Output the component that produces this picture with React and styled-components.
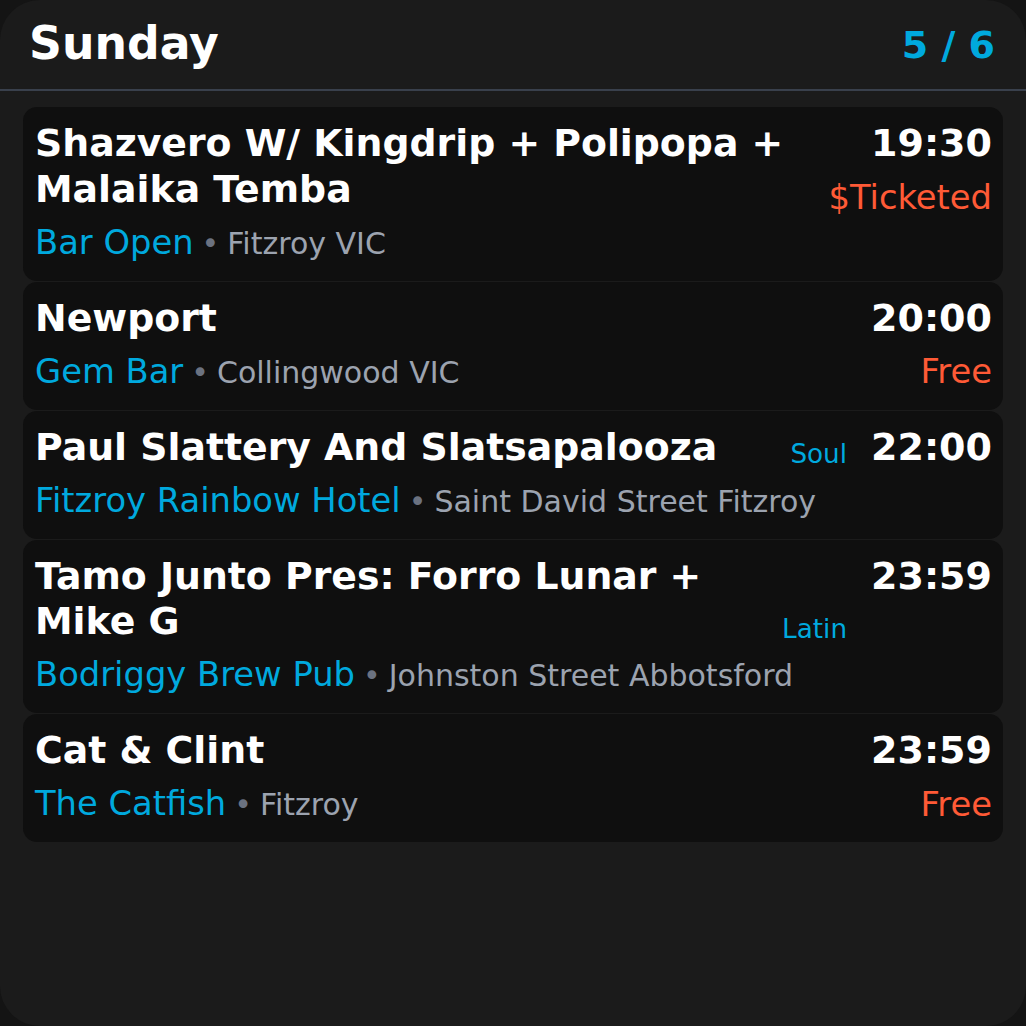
import styled, { createGlobalStyle } from 'styled-components';

const GlobalStyle = createGlobalStyle`
  html, body {
    margin: 0;
    padding: 0;
    background: #141414;
  }
  body {
    font-family: 'DejaVu Sans', 'Liberation Sans', sans-serif;
    color: #fff;
  }
`;

const Screen = styled.div`
  width: 1026px;
  height: 1026px;
  box-sizing: border-box;
  background: #1b1b1b;
  border-radius: 40px;
  overflow: hidden;
`;

const Header = styled.header`
  height: 91px;
  box-sizing: border-box;
  padding: 0 31px 0 29px;
  display: flex;
  align-items: center;
  justify-content: space-between;
  border-bottom: 2px solid #39404c;
`;

const Day = styled.h1`
  margin: 0;
  font-size: 45.7px;
  font-weight: bold;
  line-height: 1.2;
`;

const Count = styled.div`
  font-size: 38px;
  font-weight: bold;
  color: #00a9de;
`;

const List = styled.div`
  display: flex;
  flex-direction: column;
  gap: 1px;
  padding: 16px 23px;
`;

const Card = styled.div`
  display: flex;
  align-items: stretch;
  padding: 14px 11px 13px 12px;
  background: #0f0f0f;
  border-radius: 14px;
`;

const Main = styled.div`
  flex: 1;
  display: flex;
  flex-direction: column;
  min-width: 0;
`;

const Title = styled.div`
  font-size: 37.8px;
  font-weight: bold;
  line-height: 45.5px;
`;

const Place = styled.div`
  margin-top: 5.5px;
  font-size: 33.75px;
  line-height: 50px;
  white-space: nowrap;
`;

const Venue = styled.span`
  color: #00a9de;
`;

const Dot = styled.span`
  font-size: 30px;
  line-height: 1;
  color: #6b7280;
  margin: 0 8px;
`;

const Suburb = styled.span`
  font-size: 30px;
  line-height: 1;
  color: #9ca3af;
`;

const Genre = styled.div`
  align-self: flex-start;
  margin: ${p => p.$lines * 45.5 - 35}px 0 0 16px;
  font-size: 26.25px;
  line-height: 39px;
  color: #00a9de;
`;

const Side = styled.div`
  display: flex;
  flex-direction: column;
  align-items: flex-end;
  margin-left: ${p => (p.$afterGenre ? 24 : 8)}px;
`;

const Time = styled.div`
  font-size: 38px;
  font-weight: bold;
  line-height: 45.5px;
`;

const Price = styled.div`
  margin-top: 8px;
  font-size: 33.75px;
  line-height: 46px;
  color: #ff5a36;
`;

const events = [
  {
    title: 'Shazvero W/ Kingdrip + Polipopa + Malaika Temba',
    lines: 2,
    venue: 'Bar Open',
    suburb: 'Fitzroy VIC',
    time: '19:30',
    price: '$Ticketed',
  },
  {
    title: 'Newport',
    lines: 1,
    venue: 'Gem Bar',
    suburb: 'Collingwood VIC',
    time: '20:00',
    price: 'Free',
  },
  {
    title: 'Paul Slattery And Slatsapalooza',
    lines: 1,
    genre: 'Soul',
    venue: 'Fitzroy Rainbow Hotel',
    suburb: 'Saint David Street Fitzroy',
    time: '22:00',
  },
  {
    title: 'Tamo Junto Pres: Forro Lunar + Mike G',
    lines: 2,
    genre: 'Latin',
    venue: 'Bodriggy Brew Pub',
    suburb: 'Johnston Street Abbotsford',
    time: '23:59',
  },
  {
    title: 'Cat & Clint',
    lines: 1,
    venue: 'The Catfish',
    suburb: 'Fitzroy',
    time: '23:59',
    price: 'Free',
  },
];

const App = () => (
  <>
    <GlobalStyle />
    <Screen>
      <Header>
        <Day>Sunday</Day>
        <Count>5 / 6</Count>
      </Header>

      <List>
        {events.map((ev, i) => (
          <Card key={i}>
            <Main>
              <Title>{ev.title}</Title>
              <Place>
                <Venue>{ev.venue}</Venue>
                <Dot>•</Dot>
                <Suburb>{ev.suburb}</Suburb>
              </Place>
            </Main>
            {ev.genre && <Genre $lines={ev.lines}>{ev.genre}</Genre>}
            <Side $afterGenre={!!ev.genre}>
              <Time>{ev.time}</Time>
              {ev.price && <Price>{ev.price}</Price>}
            </Side>
          </Card>
        ))}
      </List>
    </Screen>
  </>
);

export default App;
